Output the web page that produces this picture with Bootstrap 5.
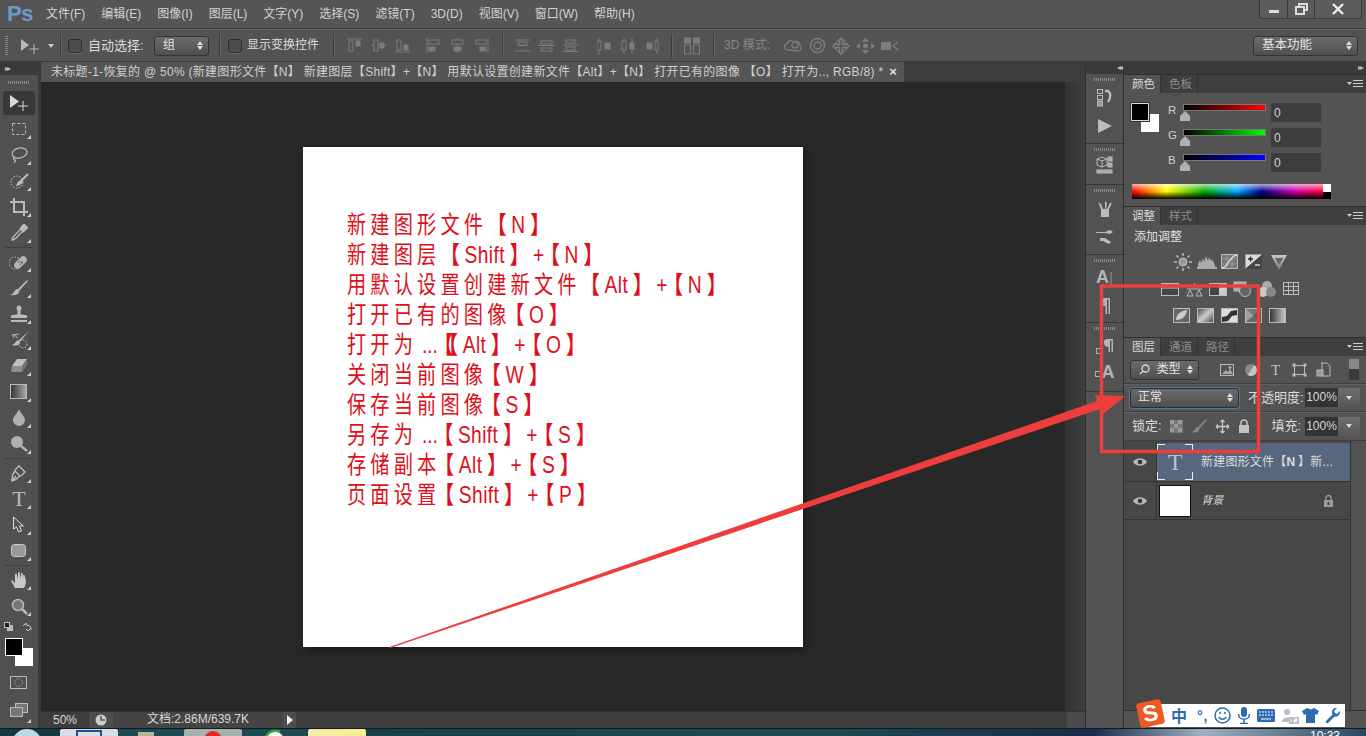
<!DOCTYPE html>
<html lang="zh-CN">
<head>
  <meta charset="UTF-8">
  <meta name="viewport" content="width=device-width, initial-scale=1.0">
  <title>Photoshop</title>
  <link rel="stylesheet" href="https://cdn.jsdelivr.net/npm/bootstrap@5.3.0/dist/css/bootstrap.min.css">
  <style>
    html, body { height: 100%; }
    body { width: 1366px; height: 736px; overflow: hidden; background: #535353; color: #d6d6d6; font: 12px/1.2 "Liberation Sans", "Noto Sans CJK SC", sans-serif; position: relative; }
    svg { display: block; flex: none; }
    .ml5 { margin-left: 5px; } .ml6 { margin-left: 6px; } .ml7 { margin-left: 7px; } .ml8 { margin-left: 8px; } .ml10 { margin-left: 10px; } .ml11 { margin-left: 11px; } .ml12 { margin-left: 12px; } .ml13 { margin-left: 13px; } .ml18 { margin-left: 18px; }

    /* top bars */
    .menu-strip { height: 29px; flex: none; background: #555; border-bottom: 1px solid #3a3a3a; padding-left: 7px; }
    .ps-logo { width: 39px; font-size: 22px; font-weight: 700; color: #6b9bc4; letter-spacing: -.5px; }
    .menu-items { gap: 16px; font-size: 12px; color: #d2d2d2; }
    .win-btns { margin: 0 4px 9px 0; align-self: flex-start; height: 19px; border: 1px solid #3d3d3d; border-top: 0; border-radius: 0 0 4px 4px; background: #5c5c5c; }
    .win-btns div { border-left: 1px solid #3d3d3d; height: 18px; width: 27px; }
    .win-btns div:first-child { border-left: 0; }
    .win-btns .win-close { width: 47px; }
    .opt-strip { height: 33px; flex: none; background: #535353; border-bottom: 1px solid #3a3a3a; border-top: 1px solid #666; }
    .grip-v { width: 3px; height: 20px; margin-left: 5px; background: repeating-linear-gradient(#888 0 1px, transparent 1px 2px); }
    .opt-sep { width: 1px; height: 24px; background: #3c3c3c; box-shadow: 1px 0 0 #636363; }
    .form-check-input.ps-check { width: 14px; height: 14px; margin-top: 0; background-color: #4d4d4d; border: 1px solid #2e2e2e; border-radius: 3px; box-shadow: 0 1px 0 #666; }
    .opt-label { color: #ddd; white-space: nowrap; }
    .opt-label-auto { width: 60px; font-size: 13px; }
    .opt-label-show { width: 73px; }
    .opt-label-3d { width: 48px; color: #868686; }
    .ps-select { height: 20px; border: 1px solid #333; border-radius: 3px; background: linear-gradient(#6b6b6b, #4f4f4f); color: #e2e2e2; padding: 0 5px 0 8px; }
    .sel-group { width: 55px; }
    .sel-work { width: 105px; margin-right: 8px; font-size: 12.5px; }
    .sel-filter { width: 69px; }
    .sel-blend { width: 109px; padding-left: 7px; border-color: #1f2f48; box-shadow: 0 0 0 1px #5d7391; }
    .updown { font-size: 0; }
    .updown::before { content: ""; display: block; border: 3px solid transparent; border-top: 0; border-bottom: 4px solid #ddd; margin-bottom: 1px; }
    .updown::after { content: ""; display: block; border: 3px solid transparent; border-bottom: 0; border-top: 4px solid #ddd; }
    .gap-align { gap: 9px; }
    .gap-align .align-break { margin-right: 7px; }
    .gap-dist { gap: 7px; }
    .gap-dist-h { gap: 10px; }
    .gap-3d { gap: 6px; }

    /* tool column */
    .main-row { height: 666px; flex: none; }
    .tool-col { width: 41px; flex: none; border-right: 3px solid #3b3b3b; background: #505050; color: #b4b4b4; }
    .col-head { height: 13px; flex: none; background: #3a3a3a; color: #bbb; font-size: 8px; line-height: 13px; padding: 0 5px; letter-spacing: -2px; }
    .col-grip { height: 15px; flex: none; }
    .col-grip i { display: block; width: 22px; height: 3px; background: repeating-linear-gradient(90deg, #8c8c8c 0 1px, transparent 1px 2px); }
    .tool-btn { height: 26px; flex: none; position: relative; }
    .tool-btn.on-tool { margin: 1px 3px; height: 24px; background: #383838; border-radius: 3px; color: #d4d4d4; }
    .tool-btn.has-more::after { content: ""; position: absolute; right: 7px; bottom: 3px; border-style: solid; border-width: 0 0 4px 4px; border-color: transparent transparent #cfcfcf transparent; }
    .tool-text { font: 22px/26px "Liberation Serif", serif; color: #bbb; }
    .tool-sep { height: 3px; flex: none; }
    .tool-sep i { display: block; width: 28px; height: 1px; margin: 1px auto 0; background: #3f3f3f; }
    .swap-row { height: 13px; flex: none; padding: 3px 6px 0 4px; }
    .swatch-wrap { height: 44px; flex: none; position: relative; }
    .swatch-fg, .swatch-bg { position: absolute; width: 18px; height: 18px; }
    .swatch-bg { background: #fff; left: 15px; top: 16px; }
    .swatch-fg { background: #000; border: 1px solid #fff; left: 5px; top: 6px; }
    .mask-row { height: 24px; flex: none; }
    .screen-btn { padding-top: 3px; }

    /* document area */
    .doc-col { width: 1044px; flex: none; }
    .tab-strip { height: 20px; flex: none; background: #3c3c3c; }
    .doc-tab { width: 863px; background: #555; color: #cfcfcf; font-size: 12px; padding-left: 10px; white-space: nowrap; letter-spacing: .29px; }
    .doc-tab .tab-x { margin-left: 6px; color: #e4e4e4; font-size: 13px; font-weight: 700; }
    .doc-body { min-height: 0; }
    .canvas-wrap { background: #282828; }
    .canvas-gutter { width: 20px; flex: none; background: linear-gradient(90deg, #333, #3e3e3e); }
    .paper { width: 500px; height: 500px; background: #fff; padding: 61px 0 0 44px; box-shadow: 2px 3px 6px #1a1a1a; overflow: hidden; }
    .paper-line { height: 30px; line-height: 30px; white-space: nowrap; font-family: "Noto Sans CJK SC", sans-serif; font-size: 24px; color: #dd1020; letter-spacing: 5.2px; transform: scaleX(.8); transform-origin: left center; }
    .paper-line b { font-family: "Liberation Sans", sans-serif; font-weight: 400; letter-spacing: .5px; margin: 0 6px; }
    .paper-line b.plus-sign { margin: 0 -5px 0 5px; }
    .paper-line b.dots { margin: 0 -5px 0 6px; letter-spacing: 0; }
    .paper-line em { font-style: normal; letter-spacing: 0; font-weight: 700; }
    .paper-line em.double-open { letter-spacing: -6px; }
    .paper-line em.snug { margin-left: -7px; }
    .status-strip { height: 17px; flex: none; background: #3d3d3d; color: #d8d8d8; font-size: 12px; border-top: 1px solid #333; }
    .status-zoom { width: 48px; padding-left: 12px; }
    .status-ico { width: 24px; height: 100%; background: #4d4d4d; }
    .status-doc { width: 170px; height: 100%; background: #444; text-align: center; }
    .status-play { width: 13px; height: 100%; background: #4d4d4d; }
    .status-end { width: 18px; height: 100%; background: #4a4a4a; }

    /* dock and panels */
    .dock-col { width: 39px; flex: none; background: #525252; border-left: 1px solid #2f2f2f; border-right: 1px solid #2f2f2f; color: #b6b6b6; }
    .dock-col .col-head { height: 12px; line-height: 12px; text-align: right; padding-right: 2px; }
    .dock-grp { flex: none; border-bottom: 1px solid #363636; }
    .dock-grp .col-grip { height: 10px; }
    .dock-a { height: 70px; }
    .dock-b { height: 41px; }
    .dock-c { height: 70px; }
    .dock-d { height: 68px; }
    .dock-e { height: 69px; }
    .dock-btn { height: 28px; flex: none; }
    .dock-btn.short-btn { height: 22px; }
    .dock-btn.low-btn { height: 26px; }
    .dock-letter { color: #b4b4b4; font-size: 18px; font-weight: 700; }
    .dock-letter span { font-weight: 400; color: #888; font-size: 15px; }
    .panel-col { width: 242px; flex: none; background: #3a3a3a; min-width: 0; }
    .panel-head { height: 12px; flex: none; background: #3a3a3a; color: #bbb; font-size: 8px; line-height: 12px; text-align: right; padding-right: 4px; letter-spacing: -2px; }
    .panel-box { background: #535353; border-top: 1px solid #2f2f2f; flex: none; }
    .panel-tabs { height: 18px; background: #3f3f3f; flex-wrap: nowrap; position: relative; padding-right: 22px; }
    .panel-tabs .nav-link { padding: 0 0 0 8px; height: 18px; line-height: 18px; color: #8d8d8d; font-size: 11.5px; border-right: 1px solid #333; width: 37px; white-space: nowrap; }
    .panel-tabs .nav-link.active { background: #535353; color: #d8d8d8; }
    .panel-menu { position: absolute; right: 3px; top: 5px; }
    .color-body { height: 113px; padding: 7px 0 0 7px; position: relative; }
    .color-swatch { width: 30px; height: 30px; margin-top: 3px; position: relative; flex: none; }
    .color-swatch i { position: absolute; display: block; width: 18px; height: 18px; }
    .color-swatch .sw-b { left: 10px; top: 11px; background: #fff; }
    .color-swatch .sw-f { left: 0; top: 0; background: #000; outline: 1px solid #ddd; outline-offset: -1px; border: 2px solid #000; box-shadow: 0 0 0 1px #333; }
    .slider-group { margin-left: 5px; }
    .slider-row { height: 25px; }
    .slider-row label { width: 18px; color: #cfcfcf; font-size: 11.5px; padding-left: 2px; margin-top: -4px; }
    .slider-track { width: 81px; height: 5px; margin-top: -10px; outline: 1px solid #777; position: relative; }
    .slider-track::after { content: ""; position: absolute; left: -4px; top: 6px; width: 10px; height: 10px; background: #b0b0b0; clip-path: polygon(50% 0, 100% 50%, 100% 100%, 0 100%, 0 50%); }
    .track-r { background: linear-gradient(90deg, #000, #f00); }
    .track-g { background: linear-gradient(90deg, #000, #0f0); }
    .track-b { background: linear-gradient(90deg, #000, #00f); }
    .form-control.ps-num { width: 50px; height: 19px; padding: 0 0 0 3px; margin: 0 0 0 6px; background: #3d3d3d; color: #d0d0d0; border: 0; border-radius: 0; font-size: 12px; box-shadow: none; }
    .spectrum { width: 199px; height: 15px; margin: 9px 0 0 1px; display: flex; }
    .spectrum-main { flex: 1; background: linear-gradient(#ffffffaa, transparent 50%, #000 100%), linear-gradient(90deg, #f00, #ff0 18%, #0a0 38%, #0af 55%, #008 68%, #c0a 85%, #f03); }
    .spectrum-end { width: 8px; background: linear-gradient(#fff 50%, #000 50%); }
    .adj-body { height: 112px; padding: 5px 0 0 10px; position: relative; }
    .adj-title { color: #e0e0e0; font-size: 12px; margin-bottom: 4px; }
    .adj-row { gap: 4px; height: 27px; padding-right: 38px; color: #b0b0b0; }
    .layer-box { min-height: 0; }
    .layer-tools { height: 28px; flex: none; padding: 0 6px; border-bottom: 1px solid #3f3f3f; box-shadow: 0 1px 0 #5f5f5f; }
    .layer-tools.lock-tools { height: 29px; }
    .layer-tools .lbl { color: #dcdcdc; white-space: nowrap; font-size: 13px; }
    .lbl-opacity { width: 57px; margin-left: 9px; }
    .lbl-lock { width: 39px; margin-left: 2px; }
    .lbl-fill { margin-right: 4px; }
    .filter-icons { margin-left: 21px; gap: 9px; }
    .filter-t { width: 15px; font: 15px/14px "Liberation Serif", serif; color: #c0c0c0; text-align: center; }
    .filter-toggle { margin-right: 1px; }
    .lock-icons { gap: 8px; margin-left: -1px; }
    .pct-box { width: 33px; height: 19px; background: #333; color: #d8d8d8; text-align: center; line-height: 19px; }
    .pct-btn { width: 22px; height: 19px; background: linear-gradient(#6e6e6e, #585858); margin-right: 0; }
    .pct-btn::after { content: ""; border: 3px solid transparent; border-bottom: 0; border-top: 4px solid #ddd; }
    .layer-rows { min-height: 0; }
    .layer-col { background: #474747; }
    .layer-list { background: transparent; border-radius: 0; width: 226px; margin-top: 2px; }
    .layer-item { display: flex; align-items: center; height: 39px; padding: 0; border: 0; border-radius: 0; border-bottom: 1px solid #353535; background: #474747; color: #dcdcdc; font-size: 12px; }
    .layer-item.picked { background: #56677e; }
    .layer-item.base-row { height: 38px; }
    .eye-cell { width: 33px; height: 100%; border-right: 1px solid #363636; flex: none; background: #474747; }
    .layer-thumb { width: 32px; height: 32px; background: #fff; border: 1px solid #111; margin-left: 2px; flex: none; }
    .type-thumb { width: 36px; height: 36px; flex: none; position: relative; color: #b9c2cd; font: 24px/36px "Liberation Serif", serif; text-align: center; }
    .type-thumb::before { content: ""; position: absolute; inset: 0; background:
      linear-gradient(#eee, #eee) 0 0/8px 1px no-repeat, linear-gradient(#eee, #eee) 0 0/1px 8px no-repeat,
      linear-gradient(#eee, #eee) 100% 0/8px 1px no-repeat, linear-gradient(#eee, #eee) 100% 0/1px 8px no-repeat,
      linear-gradient(#eee, #eee) 0 100%/8px 1px no-repeat, linear-gradient(#eee, #eee) 0 100%/1px 8px no-repeat,
      linear-gradient(#eee, #eee) 100% 100%/8px 1px no-repeat, linear-gradient(#eee, #eee) 100% 100%/1px 8px no-repeat; }
    .layer-name { margin-left: 8px; white-space: nowrap; letter-spacing: .2px; }
    .layer-name span { letter-spacing: 3px; font-weight: 700; }
    .layer-bg-name { margin-left: 11px; font-size: 11px; transform: skewX(-14deg); }
    .layer-lock { margin-right: 16px; }
    .layer-side { background: #525252; border-left: 1px solid #333; }
    .layer-fill { background: #474747; }
    .layer-foot { height: 18px; flex: none; background: #535353; border-top: 1px solid #333; }

    /* input method bar */
    .ime-bar { position: absolute; left: 1148px; top: 704px; width: 197px; height: 23px; background: #fff; color: #2b6cb3; gap: 6px; padding-left: 23px; }
    .ime-logo { position: absolute; left: -10px; top: -3px; width: 25px; height: 25px; background: #ee5a22; color: #fff; font: 700 23px/24px "Liberation Sans", sans-serif; text-align: center; transform: rotate(-12deg); border-radius: 3px; }
    .ime-zh { font: 700 16px/23px "Noto Sans CJK SC", sans-serif; }
    .ime-pt { font: 700 14px/14px "Liberation Sans", sans-serif; margin: 0 -1px 0 4px; letter-spacing: 1px; }
    .ime-user { margin-right: -3px; }

    /* taskbar */
    .task-strip { height: 8px; flex: none; background: linear-gradient(90deg, #14393f 0, #1d4a52 60%, #1a2c4c 80%, #9eb0c0 88%, #2a4560 100%); overflow: hidden; border-top: 1px solid #0d1c22; }
    .orb { width: 30px; height: 30px; flex: none; margin: 0 18px 0 12px; border-radius: 50%; background: #bcd8e8; }
    .task-btn { width: 58px; height: 8px; flex: none; border-radius: 2px 2px 0 0; overflow: hidden; }
    .task-pale { background: #d8dee2; }
    .task-teal { background: #1c4a50; width: 66px; }
    .task-grey { background: #a8b0ae; }
    .task-yellow { background: linear-gradient(90deg, #f2ecb0, #f7ef8c); }
    .task-clock { color: #fff; font-size: 12px; line-height: 12px; margin-left: auto; margin-right: 26px; margin-top: 1px; }

    .mark-layer { position: absolute; left: 0; top: 0; pointer-events: none; }
  </style>
</head>
<body class="d-flex flex-column">
  <!-- menu bar -->
  <div class="menu-strip d-flex align-items-center">
    <div class="ps-logo">Ps</div>
    <div class="menu-items d-flex">
      <span>文件(F)</span><span>编辑(E)</span><span>图像(I)</span><span>图层(L)</span><span>文字(Y)</span><span>选择(S)</span><span>滤镜(T)</span><span>3D(D)</span><span>视图(V)</span><span>窗口(W)</span><span>帮助(H)</span>
    </div>
    <div class="win-btns d-flex ms-auto">
      <div class="d-flex align-items-center justify-content-center"><svg width="12" height="12"><rect x="1" y="7" width="10" height="3" fill="#ddd"/></svg></div>
      <div class="d-flex align-items-center justify-content-center"><svg width="13" height="12" fill="none" stroke="#ddd" stroke-width="2"><rect x="4" y="1" width="8" height="6"/><rect x="1" y="4" width="8" height="7" fill="#5c5c5c"/></svg></div>
      <div class="win-close d-flex align-items-center justify-content-center"><svg width="12" height="12" stroke="#eee" stroke-width="2.4"><path d="M1 1l10 10M11 1L1 11"/></svg></div>
    </div>
  </div>

  <!-- options bar -->
  <div class="opt-strip d-flex align-items-center">
    <div class="grip-v"></div>
    <svg class="ml12" width="20" height="18" fill="#b8b8b8"><path d="M1 2v12l8-6z"/><path d="M14 7v10M9.500 12h9" stroke="#b8b8b8"/></svg>
    <svg class="ml7" width="8" height="6" fill="#ccc"><path d="M1 1h6L4 5z"/></svg>
    <div class="opt-sep ml5"></div>
    <input class="form-check-input ps-check ml7" type="checkbox">
    <span class="opt-label opt-label-auto ml6">自动选择:</span>
    <div class="ps-select sel-group ml6 d-flex align-items-center justify-content-between"><span>组</span><span class="updown"></span></div>
    <div class="opt-sep ml10"></div>
    <input class="form-check-input ps-check ml8" type="checkbox">
    <span class="opt-label opt-label-show ml5">显示变换控件</span>
    <div class="opt-sep ml13"></div>
    <div class="gap-align d-flex align-items-center ml13">
      <svg width="15" height="15" fill="none" stroke="#7c7c7c"><path d="M0 1h15"/><rect x="2" y="3" width="4" height="10"/><rect x="9" y="3" width="4" height="5" fill="#7c7c7c"/></svg>
      <svg width="15" height="15" fill="none" stroke="#7c7c7c"><path d="M0 7.500h15"/><rect x="3" y="2" width="4" height="11" fill="#535353"/><rect x="9" y="5" width="4" height="5" fill="#7c7c7c"/></svg>
      <svg class="align-break" width="15" height="15" fill="none" stroke="#7c7c7c"><path d="M0 14h15"/><rect x="2" y="2" width="4" height="10"/><rect x="9" y="7" width="4" height="5" fill="#7c7c7c"/></svg>
      <svg width="15" height="15" fill="none" stroke="#7c7c7c"><path d="M1 0v15"/><rect x="3" y="2" width="10" height="4"/><rect x="3" y="9" width="6" height="4" fill="#7c7c7c"/></svg>
      <svg width="15" height="15" fill="none" stroke="#7c7c7c"><path d="M7.500 0v15"/><rect x="2" y="2" width="11" height="4" fill="#535353"/><rect x="4" y="9" width="7" height="4" fill="#7c7c7c"/></svg>
      <svg width="15" height="15" fill="none" stroke="#7c7c7c"><path d="M14 0v15"/><rect x="2" y="2" width="10" height="4"/><rect x="6" y="9" width="6" height="4" fill="#7c7c7c"/></svg>
    </div>
    <div class="opt-sep ml13"></div>
    <div class="gap-dist d-flex align-items-center ml11">
      <svg width="17" height="15" fill="none" stroke="#7c7c7c"><path d="M1 2h15M1 13h15M4 7.500h9"/><rect x="4" y="4" width="9" height="3"/></svg>
      <svg width="17" height="15" fill="none" stroke="#7c7c7c"><path d="M0 7.500h17"/><rect x="3" y="3" width="11" height="3"/><rect x="3" y="10" width="11" height="3"/></svg>
      <svg width="17" height="15" fill="none" stroke="#7c7c7c"><path d="M1 13.500h15M1 7h15"/><rect x="4" y="2" width="9" height="3"/><rect x="4" y="9" width="9" height="3"/></svg>
    </div>
    <div class="gap-dist-h d-flex align-items-center ml18">
      <svg width="14" height="16" fill="none" stroke="#7c7c7c"><path d="M2 0v16"/><rect x="0" y="3" width="4" height="9" fill="#535353"/><rect x="8" y="5" width="5" height="6" fill="#7c7c7c"/></svg>
      <svg width="14" height="16" fill="none" stroke="#7c7c7c"><path d="M3 0v16M11 0v16"/><rect x="1" y="3" width="4" height="9" fill="#535353"/><rect x="9" y="5" width="4" height="6" fill="#7c7c7c"/></svg>
      <svg width="14" height="16" fill="none" stroke="#7c7c7c"><path d="M12 0v16"/><rect x="2" y="5" width="5" height="6" fill="#7c7c7c"/><rect x="10" y="3" width="3" height="9" fill="#535353"/></svg>
    </div>
    <div class="opt-sep ml12"></div>
    <svg class="ml12" width="16" height="18" fill="none" stroke="#7c7c7c"><rect x="0.500" y="1" width="6" height="5" fill="#7c7c7c"/><rect x="9.500" y="1" width="6" height="5" fill="#7c7c7c"/><rect x="0.500" y="8" width="6" height="9"/><rect x="9.500" y="8" width="6" height="9"/></svg>
    <div class="opt-sep ml13"></div>
    <span class="opt-label opt-label-3d ml10">3D 模式:</span>
    <div class="gap-3d d-flex align-items-center ml12">
      <svg width="19" height="15" fill="none" stroke="#7c7c7c" stroke-width="1.300"><path d="M4 12a3 3 0 0 1-1-6 4 4 0 0 1 7-2 4 4 0 0 1 6 4 3 3 0 0 1-1 5z"/><circle cx="11" cy="7" r="3"/></svg>
      <svg width="17" height="17" fill="none" stroke="#7c7c7c" stroke-width="1.500"><circle cx="8.500" cy="8.500" r="7"/><circle cx="8.500" cy="8.500" r="3.500"/></svg>
      <svg width="18" height="18" fill="none" stroke="#7c7c7c" stroke-width="1.500"><path d="M9 1l3 3-1.500 0v3.500H14V6l3 3-3 3v-1.500h-3.500V14H12l-3 3-3-3h1.500v-3.500H4V12L1 9l3-3v1.500h3.500V4H6z"/></svg>
      <svg width="19" height="16" fill="#7c7c7c"><path d="M9.500 0l4 4h-8zM9.500 16l-4-4h8zM0 8l4-3v6zM19 8l-4-3v6z"/><circle cx="9.500" cy="8" r="2.500"/></svg>
      <svg width="18" height="12" fill="#7c7c7c"><rect y="2" width="10" height="8"/><path d="M11 6l6-5v2l-4 3 4 3v2z"/></svg>
    </div>
    <div class="ps-select sel-work ms-auto d-flex align-items-center justify-content-between"><span>基本功能</span><span class="updown"></span></div>
  </div>

  <div class="main-row d-flex">
    <!-- tools -->
    <aside class="tool-col d-flex flex-column">
      <div class="col-head">▸▸</div>
      <div class="col-grip d-flex align-items-center justify-content-center"><i></i></div>
      <div class="tool-btn on-tool d-flex align-items-center justify-content-center"><svg width="22" height="18" fill="#d8d8d8"><path d="M2 1v13l9-6.500z"/><path d="M15 7v10M10 12h10" stroke="#d8d8d8"/></svg></div>
      <div class="tool-btn has-more d-flex align-items-center justify-content-center"><svg width="16" height="16" fill="none" stroke="#bbb" stroke-dasharray="3 2"><rect x="1.500" y="2.500" width="13" height="11"/></svg></div>
      <div class="tool-btn has-more d-flex align-items-center justify-content-center"><svg width="18" height="18" fill="none" stroke="#bbb" stroke-width="1.300"><ellipse cx="9.500" cy="7" rx="7.500" ry="5" transform="rotate(-12 9.500 7)"/><path d="M4 11c-1 2 0 3 1 3s0 2-1 3"/></svg></div>
      <div class="tool-btn has-more d-flex align-items-center justify-content-center"><svg width="19" height="18" fill="none"><circle cx="7" cy="10" r="6" stroke="#ccc" stroke-dasharray="1.500 1.500"/><path d="M18 2l-8 8" stroke="#bbb" stroke-width="2"/><path d="M11 8c-3 1-4 3-5 6 3 0 6-2 7-4z" fill="#bbb"/></svg></div>
      <div class="tool-btn has-more d-flex align-items-center justify-content-center"><svg width="18" height="18" fill="none" stroke="#bbb" stroke-width="2"><path d="M4 0v14h14M0 4h14v14"/></svg></div>
      <div class="tool-btn has-more d-flex align-items-center justify-content-center"><svg width="18" height="18" fill="none" stroke="#bbb" stroke-width="1.300"><path d="M2 16c0-2 1-3 2-4l7-7 2 2-7 7c-1 1-2 2-4 2z"/><path d="M10 4l4 4" stroke-width="2"/><rect x="12" y="1" width="5" height="4" transform="rotate(45 14 3)" fill="#bbb"/></svg></div>
      <div class="tool-sep"><i></i></div>
      <div class="tool-btn has-more d-flex align-items-center justify-content-center"><svg width="20" height="18" fill="none"><circle cx="6" cy="10" r="6" stroke="#ccc" stroke-dasharray="1.500 1.500"/><rect x="4" y="6" width="15" height="7" rx="3.500" transform="rotate(-45 11.500 9.500)" fill="#b4b4b4"/><path d="M9 9l5 0M11 12l3-3" stroke="#666"/></svg></div>
      <div class="tool-btn has-more d-flex align-items-center justify-content-center"><svg width="18" height="18" fill="#bbb"><path d="M17 1L8 10l1.500 1.500L18 2z"/><path d="M8 10c-2 0-3 1-4 3-.5 1.500-2 2-4 3 4 1 9 0 9.500-4.500z"/></svg></div>
      <div class="tool-btn has-more d-flex align-items-center justify-content-center"><svg width="18" height="18" fill="#bbb"><circle cx="9" cy="3" r="2.500"/><rect x="7.500" y="4" width="3" height="6"/><path d="M1 11c0-1 3-1.500 8-1.500s8 .5 8 1.500v2H1z"/><rect x="1" y="15" width="16" height="2"/></svg></div>
      <div class="tool-btn has-more d-flex align-items-center justify-content-center"><svg width="19" height="18" fill="#bbb"><path d="M18 1L9 9l1.500 1.500zM9 9c-2 0-3 1-4 3l-3 2c3 1 7 1 8-2.500z"/><path d="M9 3L2 4l2 3M4 4l4 3" fill="none" stroke="#bbb"/><circle cx="13" cy="13" r="4" fill="none" stroke="#ccc" stroke-dasharray="1.500 1.500"/></svg></div>
      <div class="tool-btn has-more d-flex align-items-center justify-content-center"><svg width="18" height="16" fill="#c0c0c0"><path d="M7 1l10 0-5 7-10 0z"/><path d="M2 8h10v6H1z" fill="#8e8e8e"/><path d="M12 8l5-7v6l-5 7z" fill="#767676"/></svg></div>
      <div class="tool-btn has-more d-flex align-items-center justify-content-center"><svg width="18" height="16"><defs><linearGradient id="toolGrad"><stop offset="0" stop-color="#333"/><stop offset="1" stop-color="#aaa"/></linearGradient></defs><rect x=".5" y=".5" width="16" height="14" fill="url(#toolGrad)" stroke="#bbb"/></svg></div>
      <div class="tool-btn has-more d-flex align-items-center justify-content-center"><svg width="14" height="18" fill="#b0b0b0"><path d="M7 0c1 4 6 7 6 11a6 6 0 0 1-12 0c0-4 5-7 6-11z"/></svg></div>
      <div class="tool-btn has-more d-flex align-items-center justify-content-center"><svg width="18" height="18" fill="#b0b0b0"><circle cx="7" cy="7" r="6"/><path d="M10 10l7 6" stroke="#b0b0b0" stroke-width="2.500"/></svg></div>
      <div class="tool-sep"><i></i></div>
      <div class="tool-btn has-more d-flex align-items-center justify-content-center"><svg width="18" height="18" fill="none" stroke="#c0c0c0" stroke-width="1.300"><path d="M2 17c0-5 1-8 3-10l5 5c-2 2-4 4-8 5zM5 6l4-4 6 6-4 4M2 17l4-5"/></svg></div>
      <div class="tool-btn has-more tool-text d-flex align-items-center justify-content-center">T</div>
      <div class="tool-btn has-more d-flex align-items-center justify-content-center"><svg width="14" height="18" fill="#555" stroke="#ddd"><path d="M1.500 1v12l3-2 2 5 3-1-2-5h4z"/></svg></div>
      <div class="tool-btn has-more d-flex align-items-center justify-content-center"><svg width="16" height="14"><rect x=".5" y=".5" width="14" height="12" rx="3" fill="#999" stroke="#ccc"/></svg></div>
      <div class="tool-sep"><i></i></div>
      <div class="tool-btn has-more d-flex align-items-center justify-content-center"><svg width="18" height="18" fill="#c8c8c8"><path d="M5 17L1 10l1-1 3 3V3l1.500-.5L8 8V1.500L9.500 1 11 8V2l1.500 0L13 8.500V4l1.500 0L16 10c0 3-1 5-2 7z"/></svg></div>
      <div class="tool-btn has-more d-flex align-items-center justify-content-center"><svg width="17" height="17"><circle cx="7" cy="7" r="5.500" fill="#777" stroke="#b8b8b8" stroke-width="1.500"/><path d="M11 11l5 5" stroke="#b8b8b8" stroke-width="2.500"/></svg></div>
      <div class="swap-row d-flex justify-content-between">
        <svg width="10" height="10"><rect x="3" y="3" width="6" height="6" fill="#bbb"/><rect x=".5" y=".5" width="5" height="5" fill="#222" stroke="#bbb"/></svg>
        <svg width="10" height="10" fill="none" stroke="#ccc"><path d="M1 4l3-3v2c3 0 5 1 5 5M9 6L6 9 4 7" /></svg>
      </div>
      <div class="swatch-wrap"><div class="swatch-bg"></div><div class="swatch-fg"></div></div>
      <div class="mask-row d-flex justify-content-center"><svg width="18" height="13" fill="none" stroke="#bbb"><rect x=".5" y=".5" width="16" height="12"/><circle cx="8.500" cy="6.500" r="4" stroke-dasharray="1 1"/></svg></div>
      <div class="tool-btn has-more screen-btn d-flex justify-content-center"><svg width="18" height="14" fill="#777" stroke="#bbb"><rect x="5.500" y=".5" width="12" height="9"/><rect x=".5" y="4.500" width="12" height="9"/></svg></div>
    </aside>

    <!-- document -->
    <section class="doc-col d-flex flex-column">
      <div class="tab-strip d-flex">
        <div class="doc-tab d-flex align-items-center">未标题-1-恢复的 @ 50% (新建图形文件【N】 新建图层【Shift】+【N】 用默认设置创建新文件【Alt】+【N】 打开已有的图像 【O】 打开为.., RGB/8) *<span class="tab-x">×</span></div>
      </div>
      <div class="doc-body d-flex flex-grow-1">
        <div class="canvas-wrap flex-grow-1 d-flex align-items-center justify-content-center">
          <div class="paper">
            <div class="paper-line">新建图形文件<em>【</em><b>N</b><em>】</em></div>
            <div class="paper-line">新建图层<em>【</em><b>Shift</b><em>】</em><b class="plus-sign">+</b><em>【</em><b>N</b><em>】</em></div>
            <div class="paper-line">用默认设置创建新文件<em>【</em><b>Alt</b><em>】</em><b class="plus-sign">+</b><em>【</em><b>N</b><em>】</em></div>
            <div class="paper-line">打开已有的图像<em class="snug">【</em><b>O</b><em>】</em></div>
            <div class="paper-line">打开为<b class="dots">...</b><em class="double-open">【</em><em>【</em><b>Alt</b><em>】</em><b class="plus-sign">+</b><em>【</em><b>O</b><em>】</em></div>
            <div class="paper-line">关闭当前图像<em class="snug">【</em><b>W</b><em>】</em></div>
            <div class="paper-line">保存当前图像<em class="snug">【</em><b>S</b><em>】</em></div>
            <div class="paper-line">另存为<b class="dots">...</b><em>【</em><b>Shift</b><em>】</em><b class="plus-sign">+</b><em>【</em><b>S</b><em>】</em></div>
            <div class="paper-line">存储副本<em class="snug">【</em><b>Alt</b><em>】</em><b class="plus-sign">+</b><em>【</em><b>S</b><em>】</em></div>
            <div class="paper-line">页面设置<em class="snug">【</em><b>Shift</b><em>】</em><b class="plus-sign">+</b><em>【</em><b>P</b><em>】</em></div>
          </div>
        </div>
        <div class="canvas-gutter"></div>
      </div>
      <div class="status-strip d-flex align-items-center">
        <div class="status-zoom">50%</div>
        <div class="status-ico d-flex align-items-center justify-content-center"><svg width="12" height="12"><circle cx="6" cy="6" r="5.500" fill="#ccc"/><path d="M6 2v4h4" fill="none" stroke="#555" stroke-width="1.500"/></svg></div>
        <div class="status-doc">文档:2.86M/639.7K</div>
        <div class="status-play d-flex align-items-center justify-content-center"><svg width="8" height="10" fill="#eee"><path d="M1 0v10l6-5z"/></svg></div>
        <div class="status-end ms-auto"></div>
      </div>
    </section>

    <!-- collapsed panel dock -->
    <aside class="dock-col d-flex flex-column">
      <div class="col-head">◂◂</div>
      <div class="dock-grp dock-a">
        <div class="col-grip d-flex align-items-center justify-content-center"><i></i></div>
        <div class="dock-btn d-flex align-items-center justify-content-center"><svg width="16" height="18" fill="none" stroke="#bbb"><rect x=".5" y=".5" width="5" height="4"/><rect x=".5" y="6.500" width="5" height="4"/><rect x=".5" y="12" width="5" height="5" fill="#999"/><path d="M8 2h3c3 2 3 7 0 11" stroke-width="2.400"/></svg></div>
        <div class="dock-btn d-flex align-items-center justify-content-center"><svg width="16" height="14" fill="#bcbcbc"><path d="M1 0v14l14-7z"/></svg></div>
      </div>
      <div class="dock-grp dock-b">
        <div class="col-grip d-flex align-items-center justify-content-center"><i></i></div>
        <div class="dock-btn short-btn d-flex align-items-center justify-content-center"><svg width="17" height="18" fill="none" stroke="#bbb"><path d="M6 1l5 2v6l-5 2-5-2V3zM1 3l5 2 5-2M6 5v6"/><rect x="12" y="1" width="4" height="4" fill="#aaa"/><rect x="12" y="7" width="4" height="4" fill="#aaa"/><rect x="1" y="14" width="15" height="3" fill="#aaa"/></svg></div>
      </div>
      <div class="dock-grp dock-c">
        <div class="col-grip d-flex align-items-center justify-content-center"><i></i></div>
        <div class="dock-btn d-flex align-items-center justify-content-center"><svg width="16" height="18" fill="#bbb"><rect x="4" y="9" width="8" height="8"/><path d="M4 9L1 2l3 2 2 5zM8 9V1l2 2-1 6zM12 9l3-6-2 0-3 6z"/></svg></div>
        <div class="dock-btn d-flex align-items-center justify-content-center"><svg width="18" height="14" fill="#bbb"><path d="M0 2h9l5-2 3 2-3 2-5-1H0zM4 8h5l6 4-2 2-6-3H4z"/></svg></div>
      </div>
      <div class="dock-grp dock-d">
        <div class="col-grip d-flex align-items-center justify-content-center"><i></i></div>
        <div class="dock-btn low-btn dock-letter d-flex align-items-center justify-content-center">A<span>|</span></div>
        <div class="dock-btn d-flex align-items-center justify-content-center"><svg width="12" height="17" fill="#b4b4b4"><path d="M5 1h6v16H9.500V2.500H8V17H6.500V9A4 4 0 0 1 5 1z"/></svg></div>
      </div>
      <div class="dock-grp dock-e">
        <div class="col-grip d-flex align-items-center justify-content-center"><i></i></div>
        <div class="dock-btn low-btn d-flex align-items-center justify-content-center"><svg width="20" height="17" fill="#b4b4b4"><path d="M12 1h6v13h-1.500V2.500H15V14h-1.500V8.500A3.800 3.800 0 0 1 12 1z"/><rect x="1.500" y="10.500" width="5" height="5" fill="none" stroke="#b4b4b4"/></svg></div>
        <div class="dock-btn dock-letter d-flex align-items-center justify-content-center"><svg width="7" height="7" fill="none" stroke="#b4b4b4"><rect x=".5" y="1.500" width="5" height="5"/></svg>A</div>
      </div>
    </aside>

    <!-- panels -->
    <aside class="panel-col d-flex flex-column">
      <div class="panel-head">▸▸</div>

      <div class="panel-box">
        <ul class="nav panel-tabs">
          <li><a class="nav-link active">颜色</a></li>
          <li><a class="nav-link">色板</a></li>
          <svg class="panel-menu" width="16" height="9" fill="#ccc"><path d="M0 2h5L2.500 5z"/><rect x="6" y="0" width="10" height="1"/><rect x="6" y="3" width="10" height="1"/><rect x="6" y="6" width="10" height="1"/></svg>
        </ul>
        <div class="color-body">
          <div class="d-flex">
            <div class="color-swatch"><i class="sw-b"></i><i class="sw-f"></i></div>
            <div class="slider-group">
              <div class="slider-row d-flex align-items-center"><label>R</label><div class="slider-track track-r"></div><input class="form-control ps-num" value="0"></div>
              <div class="slider-row d-flex align-items-center"><label>G</label><div class="slider-track track-g"></div><input class="form-control ps-num" value="0"></div>
              <div class="slider-row d-flex align-items-center"><label>B</label><div class="slider-track track-b"></div><input class="form-control ps-num" value="0"></div>
            </div>
          </div>
          <div class="spectrum"><div class="spectrum-main"></div><div class="spectrum-end"></div></div>
        </div>
      </div>

      <div class="panel-box">
        <ul class="nav panel-tabs">
          <li><a class="nav-link active">调整</a></li>
          <li><a class="nav-link">样式</a></li>
          <svg class="panel-menu" width="16" height="9" fill="#ccc"><path d="M0 2h5L2.500 5z"/><rect x="6" y="0" width="10" height="1"/><rect x="6" y="3" width="10" height="1"/><rect x="6" y="6" width="10" height="1"/></svg>
        </ul>
        <div class="adj-body">
          <div class="adj-title">添加调整</div>
          <div class="adj-row d-flex align-items-center justify-content-center">
            <svg width="20" height="18" fill="none" stroke="#bbb"><circle cx="10" cy="9" r="4" fill="#999"/><path d="M10 0v3M10 15v3M1 9h3M16 9h3M3.500 2.500l2 2M14.500 13.500l2 2M3.500 15.500l2-2M14.500 4.500l2-2" stroke-width="1.500"/></svg>
            <svg width="20" height="14" fill="#aaa"><path d="M1 12V9l2-4 1 3 2-5 1 4 2-6 2 5 1-4 2 4 1-2 3 6v2z"/><rect x="0" y="12" width="20" height="2"/></svg>
            <svg width="20" height="16" fill="#777" stroke="#bbb"><rect x=".5" y=".5" width="16" height="14"/><path d="M.5 5h16M.5 10h16M6 .5v14M11 .5v14" stroke="#999"/><path d="M1 14c6 0 7-12 15-13" fill="none" stroke="#ddd" stroke-width="1.300"/></svg>
            <svg width="20" height="16"><rect x=".5" y=".5" width="16" height="14" fill="#dcdcdc" stroke="#999"/><path d="M.5 14.500L17 .5V15H.5z" fill="#444"/><path d="M3 5h5M5.500 2.500v5" stroke="#222" stroke-width="1.300"/><path d="M10 11h5" stroke="#eee" stroke-width="1.300"/></svg>
            <svg width="20" height="18"><defs><linearGradient id="vibeGrad" x2="0" y2="1"><stop offset="0" stop-color="#c8c8c8"/><stop offset="1" stop-color="#777"/></linearGradient></defs><path d="M2 2h16L10 17z" fill="url(#vibeGrad)"/><path d="M6 5h8l-4 7z" fill="#666"/></svg>
          </div>
          <div class="adj-row d-flex align-items-center justify-content-center">
            <svg width="20" height="16"><rect x=".5" y="2.500" width="17" height="12" fill="#888" stroke="#bbb"/><rect x="1" y="8" width="16" height="6" fill="#444"/></svg>
            <svg width="20" height="16" fill="none" stroke="#bbb"><path d="M9.500 2v3M2 8h15M5 9l-3 6h6zM14 9l-3 6h6z"/></svg>
            <svg width="20" height="16"><rect x=".5" y="2.500" width="17" height="12" fill="#444" stroke="#bbb"/><rect x="10" y="3" width="7" height="11" fill="#ccc"/></svg>
            <svg width="20" height="18" fill="none" stroke="#bbb"><rect x="1" y="2" width="12" height="9" fill="#aaa"/><circle cx="12" cy="11" r="5.500" fill="#666"/></svg>
            <svg width="20" height="18" fill="#aaa"><circle cx="10" cy="6" r="5"/><circle cx="6" cy="12" r="5" fill="#ccc"/><circle cx="14" cy="12" r="5" fill="#888"/></svg>
            <svg width="20" height="16" fill="none" stroke="#bbb"><rect x="2.500" y="1.500" width="15" height="12"/><path d="M2.500 5.500h15M2.500 9.500h15M7.500 1.500v12M12.500 1.500v12"/></svg>
          </div>
          <div class="adj-row d-flex align-items-center justify-content-center">
            <svg width="20" height="16"><rect x=".5" y=".5" width="16" height="14" fill="#666" stroke="#bbb"/><path d="M3 12c0-5 4-9 11-10-1 6-4 10-11 10z" fill="#ccc"/></svg>
            <svg width="20" height="16"><defs><linearGradient id="postGrad" x2="1" y2="1"><stop offset="0" stop-color="#444"/><stop offset=".5" stop-color="#ccc"/><stop offset="1" stop-color="#444"/></linearGradient></defs><rect x=".5" y=".5" width="16" height="14" fill="url(#postGrad)" stroke="#bbb"/></svg>
            <svg width="20" height="16"><rect x=".5" y=".5" width="16" height="14" fill="#ddd" stroke="#bbb"/><path d="M1 14V9l5-1 4-5 6-1v5l-5 1-4 5z" fill="#333"/></svg>
            <svg width="20" height="16"><rect x=".5" y=".5" width="16" height="14" fill="#777" stroke="#bbb"/><path d="M1 1l15 13H1z" fill="#bbb" opacity=".6"/><path d="M16 1L1 14h15z" fill="#444" opacity=".6"/></svg>
            <svg width="20" height="16"><defs><linearGradient id="mapGrad"><stop offset="0" stop-color="#333"/><stop offset="1" stop-color="#ccc"/></linearGradient></defs><rect x=".5" y=".5" width="16" height="14" fill="url(#mapGrad)" stroke="#bbb"/></svg>
          </div>
        </div>
      </div>

      <div class="panel-box layer-box flex-grow-1 d-flex flex-column">
        <ul class="nav panel-tabs">
          <li><a class="nav-link active">图层</a></li>
          <li><a class="nav-link">通道</a></li>
          <li><a class="nav-link">路径</a></li>
          <svg class="panel-menu" width="16" height="9" fill="#ccc"><path d="M0 2h5L2.500 5z"/><rect x="6" y="0" width="10" height="1"/><rect x="6" y="3" width="10" height="1"/><rect x="6" y="6" width="10" height="1"/></svg>
        </ul>
        <div class="layer-tools d-flex align-items-center">
          <div class="ps-select sel-filter d-flex align-items-center justify-content-between">
            <svg width="11" height="11" fill="none" stroke="#ddd" stroke-width="1.300"><circle cx="6.500" cy="4.500" r="3.500"/><path d="M4 7l-3 3"/></svg>
            <span>类型</span><span class="updown"></span>
          </div>
          <div class="filter-icons d-flex align-items-center">
            <svg width="15" height="14" fill="none" stroke="#b8b8b8"><rect x=".5" y="1.500" width="13" height="11"/><path d="M2 11l4-4 2 2 2-3 3 5z" fill="#aaa" stroke="none"/><circle cx="10" cy="4.500" r="1" fill="#bbb"/></svg>
            <svg width="15" height="14"><circle cx="7" cy="7" r="6" fill="#8a8a8a"/><path d="M7 1a6 6 0 0 1 0 12z" fill="#c4c4c4" transform="rotate(35 7 7)"/></svg>
            <span class="filter-t">T</span>
            <svg width="15" height="14" fill="#bbb" stroke="#bbb"><rect x="2.500" y="2.500" width="10" height="9" fill="none"/><rect x="1" y="1" width="2" height="2"/><rect x="12" y="1" width="2" height="2"/><rect x="1" y="11" width="2" height="2"/><rect x="12" y="11" width="2" height="2"/></svg>
            <svg width="15" height="15" fill="none" stroke="#bbb"><path d="M5 1h6l3 3v10H6V1"/><rect x="1" y="8" width="6" height="6" fill="#999"/></svg>
          </div>
          <svg class="filter-toggle ms-auto" width="10" height="21"><rect width="10" height="10" fill="#888"/><rect y="10" width="10" height="11" fill="#3a3a3a"/></svg>
        </div>
        <div class="layer-tools d-flex align-items-center">
          <div class="ps-select sel-blend d-flex align-items-center justify-content-between"><span>正常</span><span class="updown"></span></div>
          <span class="lbl lbl-opacity">不透明度:</span>
          <div class="pct-box">100%</div>
          <div class="pct-btn d-flex align-items-center justify-content-center"></div>
        </div>
        <div class="layer-tools lock-tools d-flex align-items-center">
          <span class="lbl lbl-lock">锁定:</span>
          <div class="lock-icons d-flex align-items-center">
            <svg width="13" height="13"><rect width="13" height="13" fill="#777"/><path d="M0 0h4v4H0zM8 0h4v4H8zM4 4h4v4H4zM0 8h4v4H0zM8 8h4v4H8z" fill="#9a9a9a"/></svg>
            <svg width="16" height="14" fill="#868686"><path d="M15 0L7 8l1.500 1.500L16 1zM7 8c-2 0-3 1-3 3l-3 2c3 1 7 1 7.500-3.500z"/></svg>
            <svg width="15" height="15" fill="none" stroke="#c8c8c8" stroke-width="1.300"><path d="M7.500 1v13M1 7.500h13M7.500 1L5.500 3M7.500 1l2 2M7.500 14l-2-2M7.500 14l2-2M1 7.500l2-2M1 7.500l2 2M14 7.500l-2-2M14 7.500l-2 2"/></svg>
            <svg width="12" height="14" fill="#c4c4c4"><path d="M3 6V4a3 3 0 0 1 6 0v2" fill="none" stroke="#c4c4c4" stroke-width="1.500"/><rect x="1" y="6" width="10" height="8"/></svg>
          </div>
          <span class="lbl lbl-fill ms-auto">填充:</span>
          <div class="pct-box">100%</div>
          <div class="pct-btn d-flex align-items-center justify-content-center"></div>
        </div>
        <div class="layer-rows d-flex flex-grow-1">
          <div class="layer-col d-flex flex-column">
            <div class="list-group layer-list">
              <div class="list-group-item layer-item picked">
                <div class="eye-cell d-flex align-items-center justify-content-center"><svg width="14" height="10" fill="#b4b4b4"><path d="M0 5c3-5 11-5 14 0-3 5-11 5-14 0z"/><circle cx="7" cy="5" r="2.200" fill="#333"/></svg></div>
                <div class="type-thumb">T</div>
                <div class="layer-name">新建图形文件【<span>N</span>】新...</div>
              </div>
              <div class="list-group-item layer-item base-row">
                <div class="eye-cell d-flex align-items-center justify-content-center"><svg width="14" height="10" fill="#b4b4b4"><path d="M0 5c3-5 11-5 14 0-3 5-11 5-14 0z"/><circle cx="7" cy="5" r="2.200" fill="#333"/></svg></div>
                <div class="layer-thumb"></div>
                <div class="layer-bg-name">背景</div>
                <svg class="layer-lock ms-auto" width="11" height="13" fill="#9c9c9c"><path d="M3 6V4a2.500 2.500 0 0 1 5 0v2" fill="none" stroke="#9c9c9c" stroke-width="1.300"/><rect x="1" y="6" width="9" height="7"/><rect x="4.500" y="8" width="2" height="3" fill="#474747"/></svg>
              </div>
            </div>
            <div class="layer-fill flex-grow-1"></div>
          </div>
          <div class="layer-side flex-grow-1"></div>
        </div>
        <div class="layer-foot"></div>
      </div>
    </aside>
  </div>

  <!-- taskbar -->
  <div class="task-strip d-flex">
    <div class="orb"></div>
    <div class="task-btn task-pale"><svg width="58" height="8"><rect x="16" y="1" width="26" height="7" fill="#1f4f9c"/><rect x="18" y="3" width="22" height="5" fill="#d8dee2"/></svg></div>
    <div class="task-btn task-teal"><svg width="66" height="8"><rect x="20" y="3" width="16" height="5" fill="#b8b49a"/></svg></div>
    <div class="task-btn task-grey"><svg width="58" height="8"><circle cx="29" cy="11" r="9" fill="#e02a20"/></svg></div>
    <div class="task-btn task-teal"><svg width="66" height="8"><circle cx="32" cy="12" r="10" fill="#fff"/><path d="M24 8a10 10 0 0 1 14-5" stroke="#2fa83c" stroke-width="2.500" fill="none"/></svg></div>
    <div class="task-btn task-yellow"></div>
    <div class="task-clock">10:33</div>
  </div>

  <!-- input method bar -->
  <div class="ime-bar d-flex align-items-center">
    <div class="ime-logo">S</div>
    <span class="ime-zh">中</span>
    <span class="ime-pt">°,</span>
    <svg width="17" height="17" fill="none" stroke="#2b6cb3" stroke-width="1.500"><circle cx="8.500" cy="8.500" r="7.500"/><path d="M5 10c1 3 6 3 7 0"/><path d="M6 5v2M11 5v2"/></svg>
    <svg width="14" height="17" fill="#2b6cb3"><rect x="4" y="0" width="6" height="10" rx="3"/><path d="M1.500 7c0 7 11 7 11 0M7 12v4M3 16.500h8" fill="none" stroke="#2b6cb3" stroke-width="1.500"/></svg>
    <svg width="18" height="13" fill="#2b6cb3"><rect width="18" height="13" rx="1.500"/><path d="M2 3h2M5 3h2M8 3h2M11 3h2M14 3h2M2 6h2M5 6h2M8 6h2M11 6h2M14 6h2M4 10h10" stroke="#fff" stroke-width="1.200"/></svg>
    <svg class="ime-user" width="18" height="16" fill="#b4bcc4"><circle cx="6" cy="4" r="3"/><path d="M1 14c0-6 10-6 10 0z"/><rect x="8" y="9" width="10" height="7" fill="#b4bcc4"/><path d="M10 11v3M13 11h3v1.500h-3V14h3" stroke="#fff" fill="none"/></svg>
    <svg width="17" height="15" fill="#2b6cb3"><path d="M5 0l3.500 1.500L12 0l5 3-2 4-2-1v9H4V6L2 7 0 3z"/></svg>
    <svg width="16" height="16" fill="#2b6cb3"><path d="M15 3l-3 3-2-1-1-2 3-3c-3-.5-5 1.500-5 4 0 1 0 1.500.5 2.500L1 13c-1 1 1 3 2 2l6.500-6.500c3 1 6-1.500 5.500-5.500z"/></svg>
  </div>

  <!-- red annotation drawn over the screenshot -->
  <svg class="mark-layer" width="1366" height="736">
    <rect x="1101.500" y="286" width="157" height="165.500" fill="none" stroke="#ea3f3f" stroke-width="3.500"/>
    <polygon points="388,647.500 392,647.500 1100,409 1102,415 1125,396 1095,395 1097,401" fill="#ee3d3d"/>
  </svg>
</body>
</html>
